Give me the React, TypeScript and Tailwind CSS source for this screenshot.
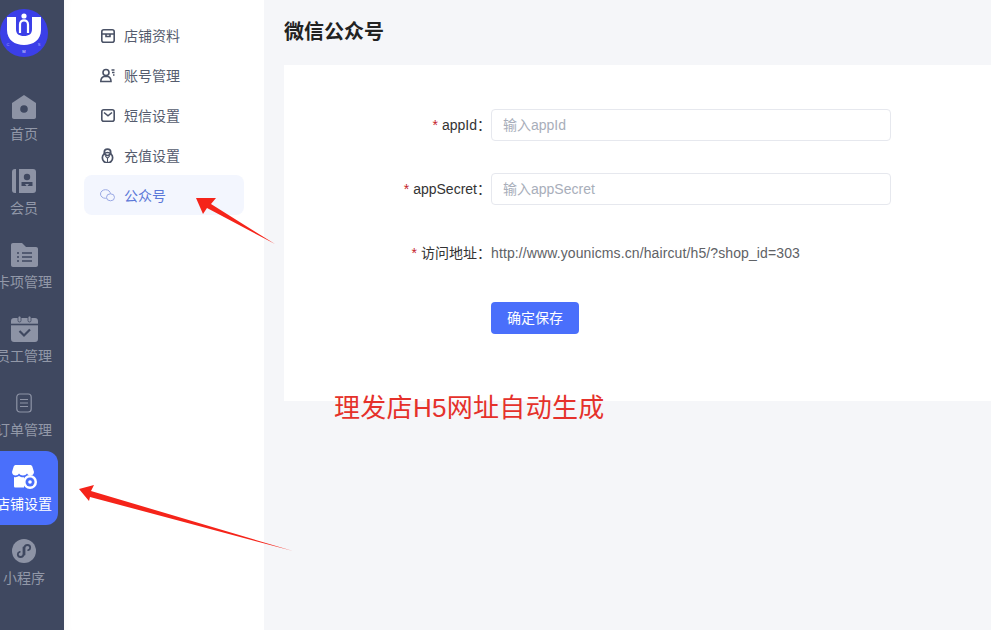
const font = "font-['Liberation_Sans','Noto_Sans_CJK_SC',sans-serif]"

function Logo() {
  return (
    <svg viewBox="0 0 48 48" className="w-12 h-12">
      <circle cx="24" cy="24" r="24" fill="#3b3fe8" />
      <path d="M7 8 H16 V20 C16 25 19 27 24 27 C29 27 32 25 32 20 V8 H41 V21 C41 31 33 36 24 36 C15 36 7 31 7 21 Z" fill="#fff" />
      <circle cx="24" cy="7" r="2.600" fill="#fff" />
      <path d="M20 24 V15.500 C20 10 28 10 28 15.500 V24" fill="none" stroke="#fff" strokeWidth="2.200" />
      <text x="8" y="37" fontSize="4" fill="#aeb2ff" textAnchor="middle">C</text>
      <text x="24" y="44" fontSize="4" fill="#e3e4ff" textAnchor="middle">M</text>
      <text x="39" y="37" fontSize="4" fill="#aeb2ff" textAnchor="middle">S</text>
    </svg>
  )
}

function HomeIcon() {
  return (
    <svg viewBox="0 0 24 24" className="w-6 h-6">
      <path d="M12 0 L24 8 V22 C24 23.200 23.200 24 22 24 H2 C.8 24 0 23.200 0 22 V8 Z" fill="#8d93a5" />
      <circle cx="12" cy="14" r="3.800" fill="#3f4860" />
    </svg>
  )
}

function MemberIcon() {
  return (
    <svg viewBox="0 0 24 24" className="w-6 h-6">
      <path d="M3 0 H4 V24 H3 C1 24 0 23 0 21 V3 C0 1 1 0 3 0 Z" fill="#8d93a5" />
      <path d="M7 0 H21 C23 0 24 1 24 3 V21 C24 23 23 24 21 24 H7 Z" fill="#8d93a5" />
      <circle cx="15" cy="8" r="3.200" fill="#3f4860" />
      <path d="M9.500 13 H20.500 V17 H9.500 Z" fill="#3f4860" />
      <path d="M13 15 H17 L15 17.500 Z" fill="#8d93a5" />
    </svg>
  )
}

function CardIcon() {
  return (
    <svg viewBox="0 0 27 24" className="w-[27px] h-6">
      <path d="M2 0 H11 L15 4 H25 C26.200 4 27 4.800 27 6 V22 C27 23.200 26.200 24 25 24 H2 C.8 24 0 23.200 0 22 V2 C0 .8 .8 0 2 0 Z" fill="#8d93a5" />
      <path d="M6 10 H8 M11 10 H21 M6 14 H8 M11 14 H21 M6 18 H8 M11 18 H21" stroke="#3f4860" strokeWidth="1.600" />
    </svg>
  )
}

function StaffIcon() {
  return (
    <svg viewBox="0 0 27 26" className="w-[27px] h-[26px]">
      <path d="M3 2 H24 C25.800 2 27 3.200 27 5 V23 C27 24.800 25.800 26 24 26 H3 C1.200 26 0 24.800 0 23 V5 C0 3.200 1.200 2 3 2 Z" fill="#8d93a5" />
      <path d="M0 8.500 H27" stroke="#3f4860" strokeWidth="1.600" />
      <rect x="7" y="0" width="3" height="6" rx="1.500" fill="#8d93a5" stroke="#3f4860" strokeWidth=".8" />
      <rect x="17" y="0" width="3" height="6" rx="1.500" fill="#8d93a5" stroke="#3f4860" strokeWidth=".8" />
      <path d="M8.500 15 L13 19.500 L19 13.500" fill="none" stroke="#3f4860" strokeWidth="2.200" />
    </svg>
  )
}

function OrderIcon() {
  return (
    <svg viewBox="0 0 16 20" className="w-4 h-5" fill="none" stroke="#8d93a5" strokeWidth="1.200">
      <rect x=".8" y="1" width="14.400" height="18" rx="3" />
      <path d="M4 6.500 H12 M4 10 H12 M4 13.500 H12" />
    </svg>
  )
}

function ShopIcon() {
  return (
    <svg viewBox="0 0 25 24" className="w-[25px] h-6">
      <path d="M4 0 H18 C19 0 20 .5 20.300 1.500 L22 7 C22 9.500 20 10.500 18.500 10.500 C17 10.500 15.500 9.500 15 8.500 C14.200 9.700 12.800 10.500 11 10.500 C9.200 10.500 7.800 9.700 7 8.500 C6.500 9.500 5 10.500 3.500 10.500 C2 10.500 0 9.500 0 7 L1.700 1.500 C2 .5 3 0 4 0 Z" fill="#fff" />
      <path d="M2 12 C4 12.500 5.500 12 7 11 C8.500 12 10 12.500 12 12.300 V22.500 H3.500 C2.500 22.500 2 22 2 21 Z" fill="#fff" />
      <circle cx="18" cy="17" r="7" fill="#fff" />
      <circle cx="18" cy="17" r="4.500" fill="#4a6ffb" />
      <circle cx="18" cy="17" r="1.800" fill="#fff" />
    </svg>
  )
}

function MiniIcon() {
  return (
    <svg viewBox="0 0 24 24" className="w-6 h-6">
      <circle cx="12" cy="12" r="12" fill="#8d93a5" />
      <path d="M11.500 8.500 V15 C11.500 17 10 18 8.500 18 C7 18 5.800 16.800 5.800 15.300 C5.800 14 6.600 13.100 7.800 12.800 M12.500 15.500 V9 C12.500 7 14 6 15.500 6 C17 6 18.200 7.200 18.200 8.700 C18.200 10 17.400 10.900 16.200 11.200" fill="none" stroke="#3f4860" strokeWidth="1.800" strokeLinecap="round" />
    </svg>
  )
}

const navItems = [
  { label: '首页', icon: <HomeIcon /> },
  { label: '会员', icon: <MemberIcon /> },
  { label: '卡项管理', icon: <CardIcon /> },
  { label: '员工管理', icon: <StaffIcon /> },
  { label: '订单管理', icon: <OrderIcon /> },
  { label: '店铺设置', icon: <ShopIcon />, active: true },
  { label: '小程序', icon: <MiniIcon /> },
]

const subItems = [
  {
    label: '店铺资料',
    icon: (
      <svg viewBox="0 0 14 14" className="w-[14px] h-[14px]" fill="none" stroke="#4a5266" strokeWidth="1.600">
        <rect x=".8" y=".8" width="12.400" height="12.400" rx="2" />
        <path d="M.8 5 H13.200 M5 5 V7.500 H9 V5" />
      </svg>
    ),
  },
  {
    label: '账号管理',
    icon: (
      <svg viewBox="0 0 15 14" className="w-[15px] h-[15px]" fill="none" stroke="#4a5266" strokeWidth="1.600">
        <circle cx="6" cy="4" r="3" />
        <path d="M.8 13 C.8 10 2.500 8.500 4 8 H8 C9.500 8.500 11 10 11 13 Z M11.500 1.500 H14.500 M12 4 H14.500 M13 6.500 H14.500" />
      </svg>
    ),
  },
  {
    label: '短信设置',
    icon: (
      <svg viewBox="0 0 14 13" className="w-[14px] h-[13px]" fill="none" stroke="#4a5266" strokeWidth="1.600">
        <rect x=".8" y=".8" width="12.400" height="11.400" rx="2" />
        <path d="M3 3.500 L7 6.800 L11 3.500" />
      </svg>
    ),
  },
  {
    label: '充值设置',
    icon: (
      <svg viewBox="0 0 14 14" className="w-[15px] h-[15px]" fill="none" stroke="#4a5266" strokeWidth="1.600">
        <circle cx="7" cy="4" r="3" />
        <circle cx="7" cy="9" r="4.800" />
        <path d="M5 7.500 L7 9.500 L9 7.500 M7 9.500 V13" strokeWidth="1" />
      </svg>
    ),
  },
  {
    label: '公众号',
    active: true,
    icon: (
      <svg viewBox="0 0 15 13" className="w-[15px] h-[13px]" fill="none" stroke="#9aa9e4" strokeWidth="1">
        <ellipse cx="5.500" cy="5" rx="5" ry="4.300" />
        <ellipse cx="10.500" cy="8.300" rx="4" ry="3.500" fill="#f3f6fe" />
      </svg>
    ),
  },
]

function FormRow({ label, children }: { label: string; children: React.ReactNode }) {
  return (
    <div className="flex items-center h-8 mb-8">
      <label className="w-[207px] text-right text-sm text-[#333]">
        <span className="text-[#c5222c] mr-1">*</span>
        {label}：
      </label>
      {children}
    </div>
  )
}

export default function App() {
  return (
    <div className={`relative flex h-[630px] w-[991px] overflow-hidden bg-[#f5f6f9] ${font}`}>
      {/* Sidebar */}
      <aside className="w-16 shrink-0 bg-[#3f4860] overflow-hidden">
        <div className="w-[68px] -ml-[10px] pt-[9px]">
          <div className="flex justify-center h-[72px]">
            <Logo />
          </div>
          {navItems.map((item) => (
            <div
              key={item.label}
              className={`h-[74px] flex flex-col items-center rounded-r-xl ${item.active ? 'bg-[#4a6ffb] text-white' : 'text-[#9298a8]'}`}
            >
              <div className="h-[46px] pt-[5px] flex items-center justify-center shrink-0">{item.icon}</div>
              <span className="text-sm leading-none whitespace-nowrap">{item.label}</span>
            </div>
          ))}
        </div>
      </aside>

      {/* Sub nav */}
      <nav className="w-[200px] shrink-0 bg-white px-5 pt-[15px] shadow-[inset_8px_0_8px_-6px_rgba(0,0,0,0.03)]">
        {subItems.map((item) => (
          <div
            key={item.label}
            className={`h-10 flex items-center gap-[9px] pl-4 pt-px rounded-lg text-sm ${item.active ? 'bg-[#f3f6fe] text-[#5b78d8]' : 'text-[#555c6e]'}`}
          >
            <span className="w-[15px] flex justify-center">{item.icon}</span>
            {item.label}
          </div>
        ))}
      </nav>

      {/* Main */}
      <main className="flex-1 min-w-0">
        <h1 className="h-[65px] pl-5 flex items-center text-xl font-bold text-[#222] -mt-px">微信公众号</h1>
        <div className="ml-5 bg-white h-[336px] pt-11 mt-px">
          <FormRow label="appId">
            <input
              placeholder="输入appId"
              className="w-[400px] h-8 px-[11px] text-sm border border-[#e6e8ee] rounded-sm placeholder:text-[#a8aeba]"
            />
          </FormRow>
          <FormRow label="appSecret">
            <input
              placeholder="输入appSecret"
              className="w-[400px] h-8 px-[11px] text-sm border border-[#e6e8ee] rounded-sm placeholder:text-[#a8aeba]"
            />
          </FormRow>
          <FormRow label="访问地址">
            <span className="text-sm tracking-[0.11px] text-[#606266]">http://www.younicms.cn/haircut/h5/?shop_id=303</span>
          </FormRow>
          <div className="pl-[207px] pt-[1px]">
            <button className="w-[88px] h-8 pb-px bg-[#4a6ffb] text-white text-sm rounded-sm">确定保存</button>
          </div>
        </div>
      </main>

      {/* Annotations drawn over the screenshot */}
      <span className="absolute left-[334px] top-[390px] text-[26px] tracking-[0.3px] leading-9 text-[#e5312b] whitespace-nowrap">理发店H5网址自动生成</span>
      <svg className="absolute inset-0 pointer-events-none" width="991" height="630" viewBox="0 0 991 630">
        <path d="M196 198 L216 198 L211 204 L275 244 L207 208 L203 214 Z" fill="#f5241a" />
        <path d="M79 489 L94 485 L91 491 L293 551 L90 497 L89 501 Z" fill="#f5241a" />
      </svg>
    </div>
  )
}
